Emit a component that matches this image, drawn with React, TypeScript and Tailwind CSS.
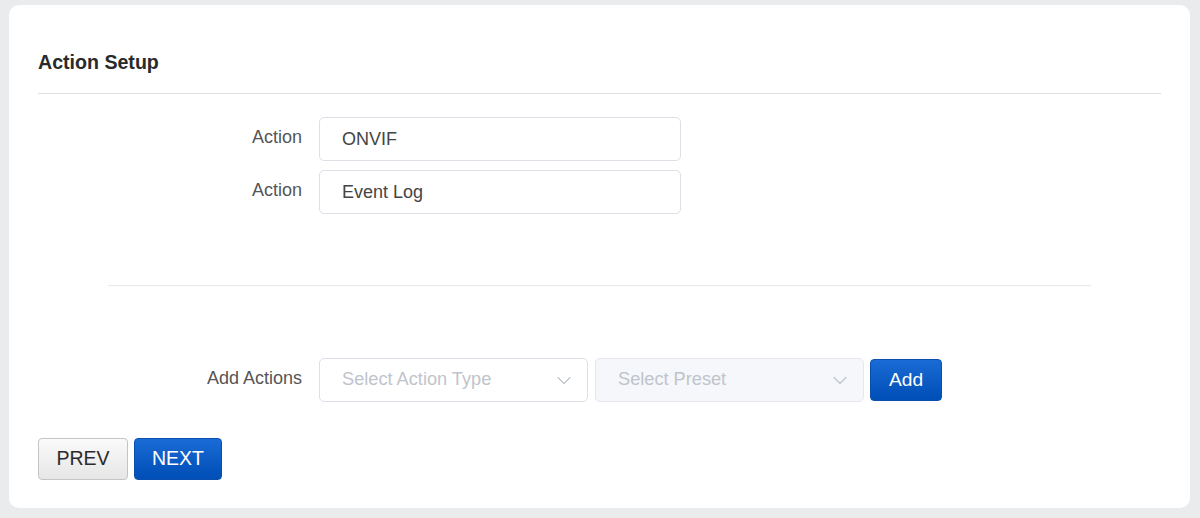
import React from "react";

const Chevron = () => (
  <svg width="16" height="16" viewBox="0 0 16 16" fill="none" className="shrink-0">
    <path d="M2 5.5L8 11.5L14 5.5" stroke="#c0c4cc" strokeWidth="1.2" strokeLinecap="round" strokeLinejoin="round" />
  </svg>
);

export default function App() {
  return (
    <div
      className="h-[518px] w-[1200px] bg-[#e9ebec] pt-[5px] pl-[9px] pr-[10px] pb-[10px]"
      style={{ fontFamily: '"Liberation Sans", Arial, sans-serif' }}
    >
      <div className="h-full rounded-[10px] bg-white px-[29px]">
        <div className="pt-[45px] pb-[19px] border-b border-[#dcdfe3]">
          <h1 className="text-[19.6px] leading-[24px] font-bold text-[#2a2a2a]">Action Setup</h1>
        </div>

        <div className="mt-[23px] flex flex-col gap-[9px]">
          <div className="flex items-center">
            <div className="w-[264px] text-right text-[18px] leading-[22px] text-[#555] -mt-[4px]">Action</div>
            <div className="ml-[17px] flex h-[44px] w-[362px] items-center rounded-[5px] border border-[#dcdfe6] pl-[22px] text-[18px] text-[#444]">
              ONVIF
            </div>
          </div>
          <div className="flex items-center">
            <div className="w-[264px] text-right text-[18px] leading-[22px] text-[#555] -mt-[4px]">Action</div>
            <div className="ml-[17px] flex h-[44px] w-[362px] items-center rounded-[5px] border border-[#dcdfe6] pl-[22px] text-[18px] text-[#444]">
              Event Log
            </div>
          </div>
        </div>

        <div className="mx-[70px] mt-[71px] h-px bg-[#e9ebed] shadow-[0_1px_2px_rgba(0,0,0,0.03)]" />

        <div className="mt-[72px] flex items-center">
          <div className="w-[264px] text-right text-[18px] leading-[22px] text-[#555] -mt-[4px]">Add Actions</div>
          <div className="ml-[17px] flex h-[44px] w-[269px] items-center justify-between rounded-[5px] border border-[#dcdfe6] bg-white pl-[22px] pr-[15px] text-[18.2px] text-[#c0c4cc]">
            <span>Select Action Type</span>
            <Chevron />
          </div>
          <div className="ml-[7px] flex h-[44px] w-[269px] items-center justify-between rounded-[5px] border border-[#e4e7ed] bg-[#f5f7fa] pl-[22px] pr-[15px] text-[18.2px] text-[#c0c4cc]">
            <span>Select Preset</span>
            <Chevron />
          </div>
          <button className="ml-[6px] flex h-[42px] w-[72px] items-center justify-center rounded-[4px] border border-[#0a4fb0] bg-gradient-to-b from-[#1a6bd6] to-[#004eb6] text-[19.2px] text-white">
            Add
          </button>
        </div>

        <div className="mt-[36px] flex gap-[6px]">
          <button className="flex h-[42px] w-[90px] items-center justify-center rounded-[4px] border border-[#c4c4c4] bg-gradient-to-b from-[#fafafa] to-[#e6e6e6] text-[19.5px] text-[#2b2b2b]">
            PREV
          </button>
          <button className="flex h-[42px] w-[88px] items-center justify-center rounded-[4px] border border-[#0a4fb0] bg-gradient-to-b from-[#1a6bd6] to-[#004eb6] text-[19.5px] text-white">
            NEXT
          </button>
        </div>
      </div>
    </div>
  );
}
